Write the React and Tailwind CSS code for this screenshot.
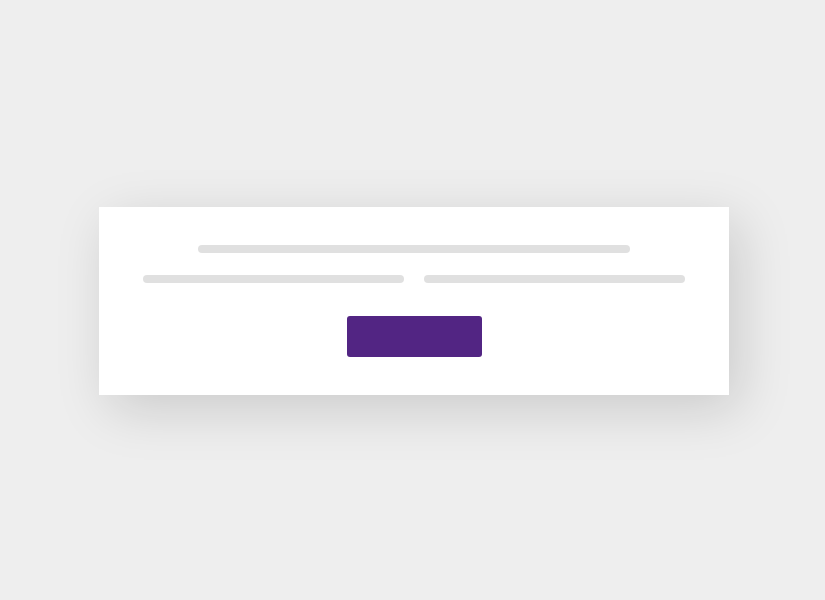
export default function App() {
    return (
        <div className="min-h-screen bg-[#eeeeee] pt-[207px] pl-[99px]">
            {/* loading placeholder card */}
            <div className="w-[630px] h-[188px] bg-white px-[44px] pt-[38px] shadow-[10px_14px_50px_rgba(0,0,0,0.15)]">
                <div className="mx-auto w-[432px] h-[8px] rounded-full bg-[#e0e0e0]" />
                <div className="mt-[22px] flex gap-[20px]">
                    <div className="flex-1 h-[8px] rounded-full bg-[#e0e0e0]" />
                    <div className="flex-1 h-[8px] rounded-full bg-[#e0e0e0]" />
                </div>
                <div className="mt-[33px] flex justify-center">
                    <div className="w-[135px] h-[41px] rounded-[3px] bg-[#522583]" />
                </div>
            </div>
        </div>
    )
}
